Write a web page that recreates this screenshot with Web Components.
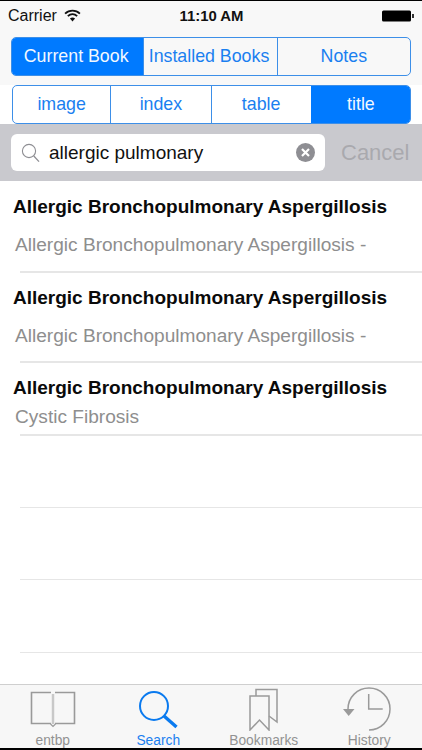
<!DOCTYPE html>
<html>
<head>
<meta charset="utf-8">
<title>entbp</title>
<style>
  html, body { margin: 0; padding: 0; background: #fff; }
  body { font-family: "Liberation Sans", Arial, sans-serif; width: 422px; height: 750px; overflow: hidden; }
  #app { display: flex; flex-direction: column; height: 750px; }
  result-list { flex: 1; }
</style>
</head>
<body>
<template id="status-tpl">
  <style>
    :host { display: flex; align-items: center; height: 29px; padding: 0 7px 0 8px; border-top: 1px solid #000; color: #111; font-size: 16px; background: #f8f8f8; }
    .left { flex: 1; display: flex; align-items: center; gap: 7px; }
    .time { font-weight: bold; font-size: 14.9px; }
    .right { flex: 1; display: flex; justify-content: flex-end; }
  </style>
  <div class="left"><span>Carrier</span>
    <svg width="17" height="13" viewBox="0 0 16 12"><path d="M1 4.200 C5 0.400 11 0.400 15 4.200" fill="none" stroke="#111" stroke-width="1.7"/><path d="M3.600 6.600 C6.200 4.200 9.800 4.200 12.400 6.600" fill="none" stroke="#111" stroke-width="1.7"/><path d="M8 11.600 L5.600 8.800 C7 7.700 9 7.700 10.400 8.800 Z" fill="#111"/></svg>
  </div>
  <span class="time">11:10 AM</span>
  <div class="right">
    <svg width="33" height="12" viewBox="0 0 33 12"><rect x="0" y="0.5" width="29" height="11" rx="1.5" fill="#000"/><rect x="30" y="4" width="2" height="4" fill="#333"/></svg>
  </div>
</template>

<template id="seg-tpl">
  <style>
    :host { display: block; background: var(--seg-bg, transparent); padding: var(--seg-pad, 0); }
    .box { display: flex; height: 37px; border: 1px solid #3d8fe8; border-radius: 5px; overflow: hidden; }
  </style>
  <div class="box"><slot></slot></div>
</template>

<template id="segitem-tpl">
  <style>
    :host { display: flex; align-items: center; justify-content: center; flex: var(--w, 1) 1 0; min-width: 0; box-sizing: border-box; color: #1a7ff0; font-size: 17.8px; white-space: nowrap; border-left: 1px solid #3d8fe8; }
    :host(:first-child) { border-left: 0; }
    :host([on]) { background: #007aff; color: #f2f8ff; border-left-color: #007aff; }
    span { margin-right: var(--nudge, 0); }
  </style>
  <span><slot></slot></span>
</template>

<template id="search-tpl">
  <style>
    :host { display: flex; align-items: center; height: 57px; background: #c9c9ce; padding: 0 0 0 11px; box-sizing: border-box; }
    .field { display: flex; align-items: center; width: 314px; height: 37px; background: #fff; border-radius: 6px; box-sizing: border-box; padding: 0 10px 0 10px; }
    .text { flex: 1; margin-left: 9px; color: #111; font-size: 19px; }
    .cancel { margin-left: 16px; color: #a9a9ae; font-size: 22px; }
  </style>
  <div class="field">
    <svg width="19" height="20" viewBox="0 0 19 20"><circle cx="8" cy="8" r="6.6" fill="none" stroke="#8e8e93" stroke-width="1.1"/><path d="M12.800 13 L18 18.600" stroke="#8e8e93" stroke-width="1.3" fill="none"/></svg>
    <span class="text"><slot></slot></span>
    <svg width="19" height="19" viewBox="0 0 19 19"><circle cx="9.5" cy="9.5" r="9.5" fill="#8e8e93"/><path d="M6 6 L13 13 M13 6 L6 13" stroke="#fff" stroke-width="2.2" fill="none"/></svg>
  </div>
  <span class="cancel">Cancel</span>
</template>

<template id="row-tpl">
  <style>
    :host { display: block; position: relative; height: var(--h, 73px); box-sizing: border-box; }
    .title { padding: 15px 0 0 13px; font-weight: bold; font-size: 19px; line-height: 22px; color: #0a0a0a; white-space: nowrap; }
    .sub { padding-left: 15px; margin-top: var(--gap, 16px); font-size: 19.1px; line-height: 22px; color: #8e8e8e; white-space: nowrap; }
    .line { position: absolute; left: 20px; right: 0; bottom: -0.5px; height: 1.5px; background: #e6e6e6; }
    :host([tall]) { --h: 91px; }
    :host([compact]) { --gap: 7px; }
  </style>
  <div class="title"><slot name="title"></slot></div>
  <div class="sub"><slot name="sub"></slot></div>
  <div class="line"></div>
</template>

<template id="list-tpl">
  <style>
    :host { display: flex; flex-direction: column; background: #fff; min-height: 0; }
    .empty { height: 72.7px; flex: none; box-sizing: border-box; border-bottom: 1.5px solid #e6e6e6; margin-left: 20px; }
  </style>
  <slot></slot>
  <div class="empty"></div>
  <div class="empty"></div>
  <div class="empty"></div>
</template>

<template id="tabs-tpl">
  <style>
    :host { display: flex; height: 66px; box-sizing: border-box; background: #f7f7f7; border-top: 1px solid #cfcfcf; border-bottom: 2px solid #000; }
  </style>
  <slot></slot>
</template>

<template id="tab-tpl">
  <style>
    :host { flex: 1; display: flex; flex-direction: column; align-items: center; color: #929292; font-size: 13.8px; }
    :host([on]) { color: #1a7ff0; }
    .icon { height: 48px; display: flex; align-items: flex-start; justify-content: center; }
    .label { line-height: 15px; white-space: nowrap; }
  </style>
  <div class="icon"><slot name="icon"></slot></div>
  <div class="label"><slot></slot></div>
</template>

<div id="app">
  <status-bar></status-bar>
  <seg-control style="--seg-bg:#f8f8f8; --seg-pad:7px 11px 9px 11px">
    <seg-item on style="--w:132; --nudge:3px">Current Book</seg-item>
    <seg-item style="--w:133; --nudge:3px">Installed Books</seg-item>
    <seg-item style="--w:133">Notes</seg-item>
  </seg-control>
  <seg-control style="--seg-bg:#fff; --seg-pad:0 11px 0 12px">
    <seg-item style="--w:98">image</seg-item>
    <seg-item style="--w:100">index</seg-item>
    <seg-item style="--w:100">table</seg-item>
    <seg-item on style="--w:99">title</seg-item>
  </seg-control>
  <search-bar>allergic pulmonary</search-bar>
  <result-list>
    <result-row tall><span slot="title">Allergic Bronchopulmonary Aspergillosis</span><span slot="sub">Allergic Bronchopulmonary Aspergillosis -</span></result-row>
    <result-row style="--h:90px"><span slot="title">Allergic Bronchopulmonary Aspergillosis</span><span slot="sub">Allergic Bronchopulmonary Aspergillosis -</span></result-row>
    <result-row compact><span slot="title">Allergic Bronchopulmonary Aspergillosis</span><span slot="sub">Cystic Fibrosis</span></result-row>
  </result-list>
  <tab-bar>
    <tab-item>
      <svg slot="icon" style="margin-top:5px" width="46" height="38" viewBox="0 0 46 38" fill="none" stroke="#9a9a9a"><path d="M21 2.500 H1.500 V33.500 H21 M25 2.500 H44.500 V33.500 H25" stroke-width="1.600"/><path d="M23 4 V34" stroke="#c8c8c8" stroke-width="2.500"/><path d="M20.500 34 L23 36.500 L25.500 34" stroke-width="1.200"/></svg>
      entbp
    </tab-item>
    <tab-item on>
      <svg slot="icon" style="margin-top:4px" width="42" height="42" viewBox="0 0 42 42" fill="none" stroke="#0a7aef"><circle cx="17" cy="17" r="14" stroke-width="2"/><path d="M27 27 L39.500 38" stroke-width="3.400"/></svg>
      Search
    </tab-item>
    <tab-item>
      <svg slot="icon" style="margin-top:3px" width="30" height="43" viewBox="0 0 30 43" fill="none" stroke="#9a9a9a" stroke-width="1.500"><path d="M1 8 H20 V42 L10.500 32 L1 42 Z"/><path d="M7 8 V1.500 H28 V34 L20 28"/></svg>
      Bookmarks
    </tab-item>
    <tab-item>
      <svg slot="icon" style="margin-top:1px" width="52" height="46" viewBox="0 0 52 46" fill="none" stroke="#9a9a9a" stroke-width="1.500"><path d="M5 23 A21 21 0 1 1 26 44"/><path d="M25.700 8 V23 H39.700"/><path d="M0 23 H11.500 L5.700 30 Z" fill="#9a9a9a" stroke="none"/></svg>
      History
    </tab-item>
  </tab-bar>
</div>

<script>
function define(tag, tplId) {
  customElements.define(tag, class extends HTMLElement {
    constructor() {
      super();
      const root = this.attachShadow({mode: "open"});
      root.appendChild(document.getElementById(tplId).content.cloneNode(true));
    }
  });
}
define("status-bar", "status-tpl");
define("seg-control", "seg-tpl");
define("seg-item", "segitem-tpl");
define("search-bar", "search-tpl");
define("result-row", "row-tpl");
define("result-list", "list-tpl");
define("tab-bar", "tabs-tpl");
define("tab-item", "tab-tpl");
</script>
</body>
</html>
